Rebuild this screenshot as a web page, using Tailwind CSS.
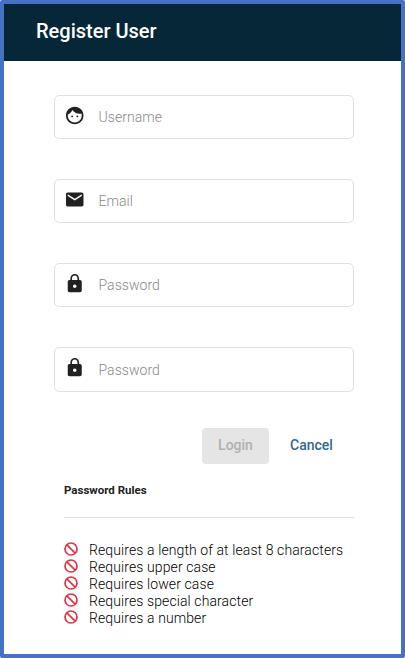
<!DOCTYPE html>
<html lang="en">
<head>
<meta charset="utf-8">
<title>Register User</title>
<script src="https://cdn.jsdelivr.net/npm/@tailwindcss/browser@4"></script>
</head>
<body class="bg-white">
<svg class="hidden">
  <symbol id="face" viewBox="-0.285 0 24 24"><path d="M9 11.95a1.050 1.050 0 1 0 0 2.100 1.050 1.050 0 0 0 0-2.100zm6 0a1.050 1.050 0 1 0 0 2.100 1.050 1.050 0 0 0 0-2.100zM12 2C6.48 2 2 6.48 2 12s4.480 10 10 10 10-4.480 10-10S17.520 2 12 2zm0 18c-4.410 0-8-3.590-8-8 0-.290.020-.580.050-.860 2.360-1.050 4.230-2.980 5.210-5.370C11.070 8.330 14.050 10 17.420 10c.780 0 1.530-.090 2.250-.260.210.710.330 1.470.330 2.260 0 4.410-3.590 8-8 8z"/></symbol>
  <symbol id="mail" viewBox="-0.285 0 24 24"><path d="M20 4H4c-1.100 0-1.990.900-1.990 2L2 18c0 1.100.900 2 2 2h16c1.100 0 2-.900 2-2V6c0-1.100-.900-2-2-2zm0 4l-8 5-8-5V6l8 5 8-5v2z"/></symbol>
  <symbol id="lock" viewBox="-0.285 0 24 24"><path d="M18 8h-1V6c0-2.760-2.240-5-5-5S7 3.240 7 6v2H6c-1.100 0-2 .900-2 2v10c0 1.100.900 2 2 2h12c1.100 0 2-.900 2-2V10c0-1.100-.900-2-2-2zm-6 9c-1.100 0-2-.900-2-2s.900-2 2-2 2 .900 2 2-.900 2-2 2zm3.100-9H8.900V6c0-1.710 1.390-3.100 3.100-3.100s3.100 1.390 3.100 3.100v2z"/></symbol>
  <symbol id="ban" viewBox="0 0 14 14"><g fill="none" stroke="#dc3545" stroke-width="1.7"><circle cx="7" cy="7" r="6"/><path d="M2.800 2.800l8.400 8.400"/></g></symbol>
</svg>
<main class="w-[405px] h-[658px] border-4 border-[#4472c4] rounded-[2px] bg-white font-[Roboto,sans-serif] text-[#212121] overflow-hidden">
  <header class="h-[57px] bg-[#052737] pl-8 flex items-center">
    <h1 class="text-white text-[20px] leading-6 font-medium pb-[3px]">Register User</h1>
  </header>
  <form class="pt-[34px] pl-[50px] w-[350px]">
    <div class="flex flex-col gap-10">
      <label class="h-11 border border-[#e0e0e0] rounded-[5px] flex items-center pl-[9px]">
        <svg class="size-[21px] fill-[#212121] mb-[3px]"><use href="#face"/></svg>
        <span class="ml-[13.500px] text-[14px] leading-4 font-light tracking-[0.05px] text-[#888]">Username</span>
      </label>
      <label class="h-11 border border-[#e0e0e0] rounded-[5px] flex items-center pl-[9px]">
        <svg class="size-[21px] fill-[#212121] mb-[3px]"><use href="#mail"/></svg>
        <span class="ml-[13.500px] text-[14px] leading-4 font-light tracking-[0.05px] text-[#888]">Email</span>
      </label>
      <label class="h-11 border border-[#e0e0e0] rounded-[5px] flex items-center pl-[9px]">
        <svg class="size-[21px] fill-[#212121] mb-[3px]"><use href="#lock"/></svg>
        <span class="ml-[13.500px] text-[14px] leading-4 font-light tracking-[0.05px] text-[#888]">Password</span>
      </label>
      <label class="h-[45px] border border-[#e0e0e0] rounded-[5px] flex items-center pl-[9px]">
        <svg class="size-[21px] fill-[#212121] mb-1"><use href="#lock"/></svg>
        <span class="ml-[13.500px] text-[14px] leading-4 font-light tracking-[0.05px] text-[#888]">Password</span>
      </label>
    </div>
    <div class="flex pt-9 pl-[148px]">
      <button type="button" disabled class="w-[67px] h-9 pb-[2px] rounded-[4px] bg-[#e5e5e5] text-[#b0b0b0] text-[14px] leading-[34px] font-medium">Login</button>
      <button type="button" class="ml-[5px] px-4 h-9 pb-[2px] text-[#366888] text-[14px] leading-[34px] font-medium">Cancel</button>
    </div>
    <section class="pl-[10px] pt-[18px]">
      <h2 class="text-[11.500px] leading-4 font-bold">Password Rules</h2>
      <hr class="mt-[19px] border-[#e0e0e0]">
      <ul class="mt-6 text-[14px] leading-[17px] font-light tracking-[0.1px] text-black whitespace-nowrap">
        <li class="flex"><svg class="size-[14px] mr-[11px]"><use href="#ban"/></svg>Requires a length of at least 8 characters</li>
        <li class="flex"><svg class="size-[14px] mr-[11px]"><use href="#ban"/></svg>Requires upper case</li>
        <li class="flex"><svg class="size-[14px] mr-[11px]"><use href="#ban"/></svg>Requires lower case</li>
        <li class="flex"><svg class="size-[14px] mr-[11px]"><use href="#ban"/></svg>Requires special character</li>
        <li class="flex"><svg class="size-[14px] mr-[11px]"><use href="#ban"/></svg>Requires a number</li>
      </ul>
    </section>
  </form>
</main>
</body>
</html>
